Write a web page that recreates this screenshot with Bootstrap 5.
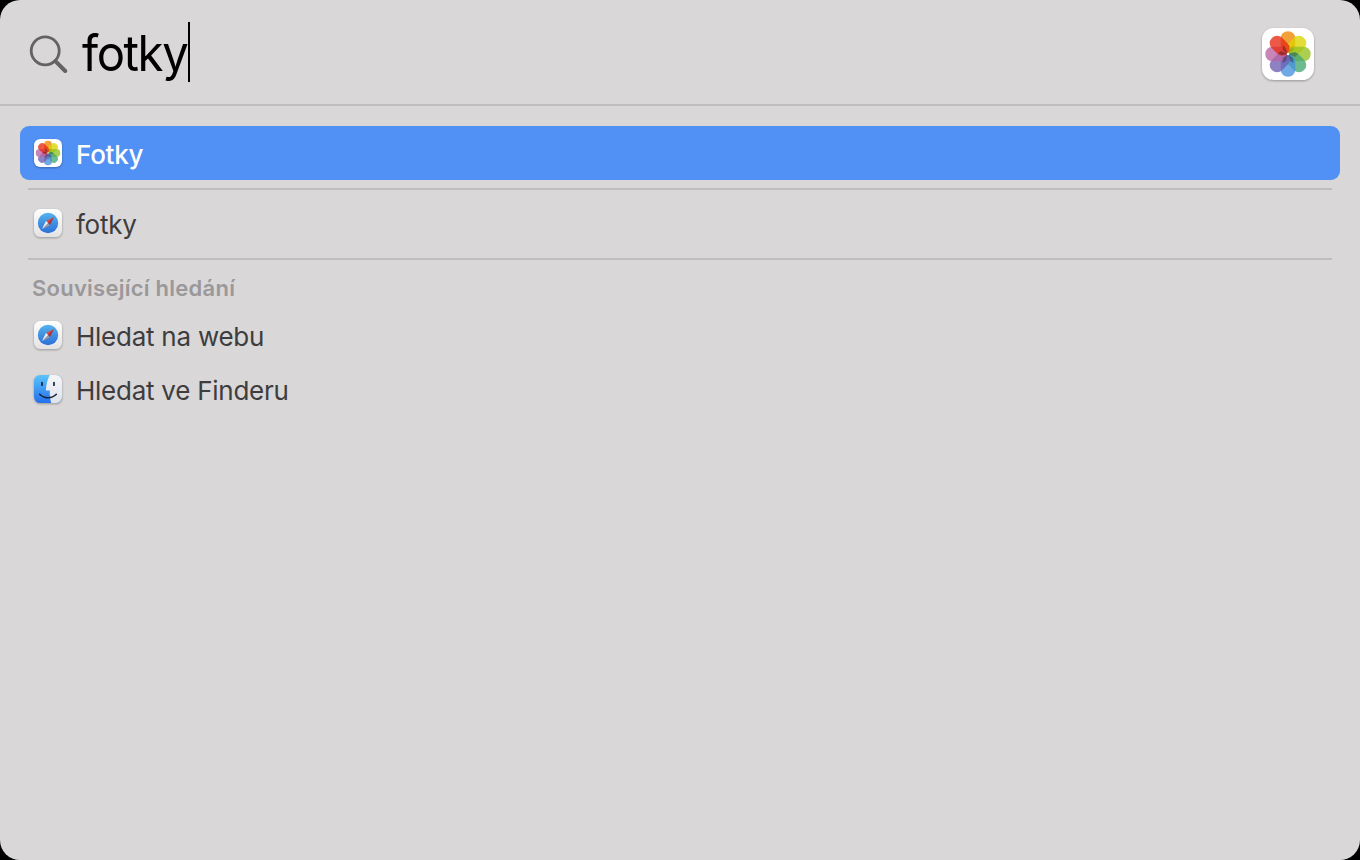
<!DOCTYPE html>
<html lang="cs">
<head>
    <meta charset="UTF-8">
    <meta name="viewport" content="width=device-width, initial-scale=1.0">
    <title>Spotlight</title>
    <link href="https://cdn.jsdelivr.net/npm/bootstrap@5.3.0/dist/css/bootstrap.min.css" rel="stylesheet">
    <style>
        body {
            background: #000;
            font-family: Inter, "Liberation Sans", sans-serif;
            color: #3e3d3e;
        }
        .spotlight {
            height: 860px;
            background: #d9d7d8;
            border-radius: 20px;
        }
        .search-bar {
            height: 106px;
            border-bottom: 2px solid #bfbdbe;
            padding: 4px 46px 0 28px;
        }
        .magnifier {
            margin-top: -4px;
        }
        .query {
            width: 107px;
            margin-left: 13px;
            margin-top: -3px;
            font-size: 49.5px;
            line-height: 60px;
            letter-spacing: -1.5px;
            color: #000;
            transform: scaleX(.955);
            transform-origin: left;
        }
        .caret {
            width: 2px;
            height: 60px;
            margin-top: -4px;
            margin-left: -1px;
            background: #000;
        }
        .results {
            padding: 20px;
        }
        .result {
            height: 54px;
            padding: 0 14px;
            border-radius: 9px;
            font-size: 26px;
            line-height: 32px;
        }
        .result svg {
            margin-bottom: 1px;
        }
        .result span {
            margin-left: 14px;
            padding-top: 3px;
            letter-spacing: -0.25px;
        }
        .result.selected {
            background: #5191f5;
            color: #fff;
        }
        .result.selected span {
            font-weight: 500;
        }
        .separator {
            height: 2px;
            margin: 8px 8px 6px;
            background: #bfbdbe;
        }
        .section-title {
            height: 42px;
            padding: 7px 12px 0;
            font-size: 22px;
            line-height: 30px;
            font-weight: 600;
            letter-spacing: 0.25px;
            color: #9a989a;
        }
        .app-icon {
            overflow: visible;
            filter: drop-shadow(0 1px 1px rgba(0, 0, 0, .3));
        }
        .petals rect {
            opacity: .78;
        }
    </style>
</head>
<body>
    <!-- Shared app icons -->
    <svg width="0" height="0" class="position-absolute">
        <defs>
            <linearGradient id="plate" x1="0" y1="0" x2="0" y2="1">
                <stop offset="0" stop-color="#fff"/>
                <stop offset="1" stop-color="#e4e3e4"/>
            </linearGradient>
            <linearGradient id="dial" x1="0" y1="0" x2="0" y2="1">
                <stop offset="0" stop-color="#55b2ee"/>
                <stop offset="1" stop-color="#2c6fd6"/>
            </linearGradient>
            <linearGradient id="faceBlue" x1="0" y1="0" x2="0" y2="1">
                <stop offset="0" stop-color="#5bc4fa"/>
                <stop offset="1" stop-color="#246fee"/>
            </linearGradient>
            <linearGradient id="faceLight" x1="0" y1="0" x2="0" y2="1">
                <stop offset="0" stop-color="#f5f5f8"/>
                <stop offset="1" stop-color="#dde3ed"/>
            </linearGradient>
            <symbol id="photos" viewBox="0 0 52 52">
                <rect width="52" height="52" rx="11.5" fill="#fff"/>
                <g class="petals" transform="translate(26 26)">
                    <rect x="-7.3" y="-22.7" width="14.6" height="22" rx="7" fill="#ee8500"/>
                    <rect x="-7.3" y="-22.7" width="14.6" height="22" rx="7" fill="#ddd400" transform="rotate(45)"/>
                    <rect x="-7.3" y="-22.7" width="14.6" height="22" rx="7" fill="#95c020" transform="rotate(90)"/>
                    <rect x="-7.3" y="-22.7" width="14.6" height="22" rx="7" fill="#45a872" transform="rotate(135)"/>
                    <rect x="-7.3" y="-22.7" width="14.6" height="22" rx="7" fill="#4692dc" transform="rotate(180)"/>
                    <rect x="-7.3" y="-22.7" width="14.6" height="22" rx="7" fill="#705fb2" transform="rotate(225)"/>
                    <rect x="-7.3" y="-22.7" width="14.6" height="22" rx="7" fill="#b864a4" transform="rotate(270)"/>
                    <rect x="-7.3" y="-22.7" width="14.6" height="22" rx="7" fill="#e82a14" transform="rotate(315)"/>
                </g>
                <!-- darker wedges where the petals meet -->
                <g transform="translate(26 26)" fill="#2a1c2c" opacity=".4">
                    <path d="M0 0 L-3 -7 L-5.5 -9 L-5 -4 Z"/>
                    <path d="M0 0 L3 -7 L5.5 -9 L5 -4 Z" opacity=".35"/>
                    <path d="M0 0 L-7 -3 L-10 -1 L-7 1 Z"/>
                    <path d="M0 0 L7 -2 L10 0 L7 3 Z" opacity=".7"/>
                    <path d="M0 0 L-5 4 L-5.5 9 L-2 7 Z"/>
                    <path d="M0 0 L5 4 L5.5 9 L2 7 Z"/>
                </g>
                <circle cx="26" cy="26" r="1.2" fill="#fff"/>
            </symbol>
            <symbol id="safari" viewBox="0 0 28 28">
                <rect width="28" height="28" rx="6.3" fill="url(#plate)"/>
                <circle cx="14" cy="14" r="10.2" fill="url(#dial)"/>
                <path d="M20 8 L12.1 12.1 L15.9 15.9 Z" fill="#e5453c"/>
                <path d="M8 20 L12.1 12.1 L15.9 15.9 Z" fill="#f4f4f6"/>
                <path d="M20 8 L15.9 15.9 L8 20 L14 14 Z" fill="#3b3050" opacity=".5"/>
            </symbol>
            <symbol id="finder" viewBox="0 0 28 28">
                <rect width="28" height="28" rx="6.3" fill="url(#faceBlue)"/>
                <path d="M15.8 0 C13.4 4.6 12.2 9.8 11.9 15.6 H15.8 C15.7 20 16 24 17.2 28 H21.7 A6.3 6.3 0 0 0 28 21.7 V6.3 A6.3 6.3 0 0 0 21.7 0 Z" fill="url(#faceLight)"/>
                <path d="M8 7.6 V10.2 M20 7.6 V10.2" stroke="#15233a" stroke-width="1.7" stroke-linecap="round"/>
                <path d="M5.7 19.3 C10.2 23.9 17.8 23.9 22.3 19.3" fill="none" stroke="#15233a" stroke-width="1.6" stroke-linecap="round"/>
            </symbol>
        </defs>
    </svg>

    <main class="spotlight d-flex flex-column">
        <div class="search-bar d-flex align-items-center">
            <svg class="magnifier" width="41" height="41" viewBox="0 0 41 41" fill="none" stroke="#646264">
                <circle cx="17.2" cy="18.8" r="14" stroke-width="2.8"/>
                <path d="M27.4 29.2 L37.2 39" stroke-width="4" stroke-linecap="round"/>
            </svg>
            <span class="query">fotky</span>
            <span class="caret"></span>
            <svg class="app-icon ms-auto" width="52" height="52"><use href="#photos"/></svg>
        </div>

        <div class="results">
            <div class="result selected d-flex align-items-center">
                <svg class="app-icon" width="28" height="28"><use href="#photos"/></svg>
                <span>Fotky</span>
            </div>
            <div class="separator"></div>
            <div class="result d-flex align-items-center">
                <svg class="app-icon" width="28" height="28"><use href="#safari"/></svg>
                <span>fotky</span>
            </div>
            <div class="separator"></div>
            <div class="section-title">Související hledání</div>
            <div class="result d-flex align-items-center">
                <svg class="app-icon" width="28" height="28"><use href="#safari"/></svg>
                <span>Hledat na webu</span>
            </div>
            <div class="result d-flex align-items-center">
                <svg class="app-icon" width="28" height="28"><use href="#finder"/></svg>
                <span>Hledat ve Finderu</span>
            </div>
        </div>
    </main>

    <script src="https://cdn.jsdelivr.net/npm/bootstrap@5.3.0/dist/js/bootstrap.bundle.min.js"></script>
</body>
</html>
